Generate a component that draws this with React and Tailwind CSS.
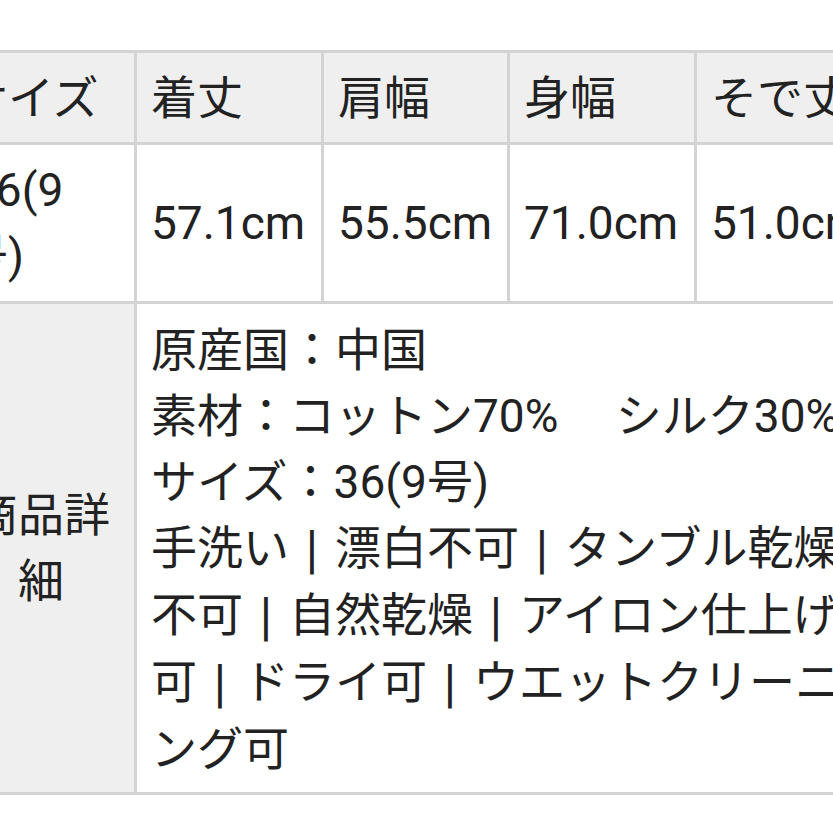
const headers = ['サイズ', '着丈', '肩幅', '身幅', 'そで丈'];
const values = ['57.1cm', '55.5cm', '71.0cm', '51.0cm'];

// each line of the detail cell; segments are separated by a bar
const details = [
  ['原産国：中国'],
  ['素材：コットン70%　 シルク30%'],
  ['サイズ：36(9号)'],
  ['手洗い', '漂白不可', 'タンブル乾燥'],
  ['不可', '自然乾燥', 'アイロン仕上げ'],
  ['可', 'ドライ可', 'ウエットクリーニ'],
  ['ング可'],
];

function Bar() {
  return (
    <span
      className="inline-block w-[46px] text-center text-[44px]"
      style={{ fontFamily: '"DejaVu Sans", sans-serif' }}
    >
      |
    </span>
  );
}

export default function App() {
  return (
    <div
      className="w-[833px] h-[833px] overflow-hidden bg-white text-[#222222] text-[46px] leading-[66px]"
      style={{ fontFamily: 'Roboto, "Noto Sans CJK JP", sans-serif' }}
    >
      <div className="ml-[-55px] mt-[50px] w-[960px] grid grid-cols-[186px_184px_183px_184px_184px] gap-[3px] p-[3px] bg-[#d3d3d3]">
        {/* header row */}
        {headers.map((h) => (
          <div key={h} className="h-[89px] bg-[#efefef] px-[14px] flex items-center whitespace-nowrap">
            {h}
          </div>
        ))}

        {/* size row */}
        <div className="h-[156px] bg-white px-[14px] flex items-center">
          <div>
            <div className="pl-[8px]">36(9</div>
            <div>号)</div>
          </div>
        </div>
        {values.map((v) => (
          <div key={v} className="h-[156px] bg-white px-[14px] flex items-center whitespace-nowrap">
            {v}
          </div>
        ))}

        {/* detail row */}
        <div className="h-[488px] bg-[#efefef] px-[14px] flex items-center justify-center text-center">
          <div>
            商品詳
            <br />
            細
          </div>
        </div>
        <div className="col-span-4 h-[488px] bg-white px-[14px] py-[13px]">
          {details.map((segs, i) => (
            <div key={i} className="whitespace-nowrap">
              {segs.map((s, j) => (
                <span key={j}>
                  {j > 0 && <Bar />}
                  {s}
                </span>
              ))}
            </div>
          ))}
        </div>
      </div>
    </div>
  );
}
